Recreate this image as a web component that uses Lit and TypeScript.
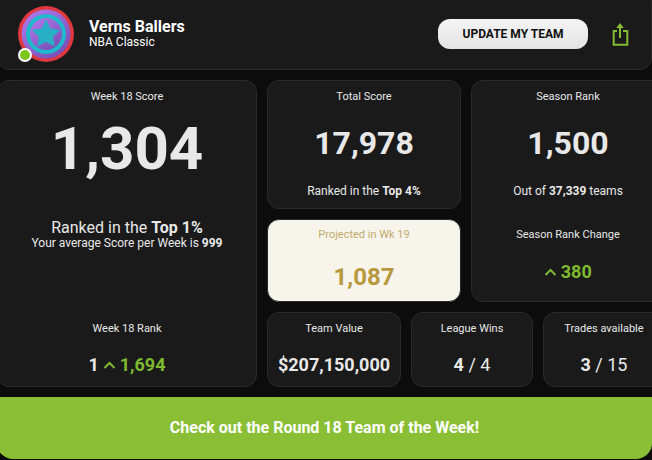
import { LitElement, css, html, svg } from 'lit'
import { customElement } from 'lit/decorators.js'

const chevron = svg`<path d="M1.5 8 L6.5 3 L11.5 8" fill="none" stroke="currentColor" stroke-width="2"/>`

@customElement('app-root')
export class AppRoot extends LitElement {
  render() {
    return html`
      <div class="page">
        <header class="card head">
          <div class="avatar">
            <svg viewBox="0 0 56 56" width="56" height="56">
              <defs>
                <linearGradient id="purple" x1="0.2" y1="0.1" x2="0.8" y2="0.9">
                  <stop offset="0" stop-color="#ab74e6"/>
                  <stop offset="1" stop-color="#7c50b8"/>
                </linearGradient>
              </defs>
              <circle cx="28" cy="28" r="28" fill="#df383f"/>
              <circle cx="28" cy="28" r="24.5" fill="url(#purple)"/>
              <circle cx="28" cy="28" r="20" fill="#1fb8cc"/>
              <circle cx="28" cy="28" r="16" fill="url(#purple)"/>
              <path d="M28 13.5 L32.4 22.4 L42.3 23.9 L35.1 30.8 L36.8 40.6 L28 36 L19.2 40.6 L20.9 30.8 L13.7 23.9 L23.6 22.4 Z" fill="#27b0c5"/>
            </svg>
            <span class="online"></span>
          </div>
          <div class="team">
            <div class="team-name">Verns Ballers</div>
            <div class="team-league">NBA Classic</div>
          </div>
          <button class="update">UPDATE MY TEAM</button>
          <svg class="share" viewBox="0 0 18 24" width="18" height="24" fill="none" stroke="#84bd33" stroke-width="2">
            <path d="M6 9 H2.7 V22.7 H16.3 V9 H12"/>
            <path d="M9 16 V4"/>
            <path d="M9 1 L12.8 6 H5.2 Z" fill="#84bd33" stroke="none"/>
          </svg>
        </header>

        <div class="grid">
          <section class="card week">
            <div class="label">Week 18 Score</div>
            <div class="huge">1,304</div>
            <div class="ranked">Ranked in the <b>Top 1%</b></div>
            <div class="avg">Your average Score per Week is <b>999</b></div>
            <div class="label week-rank">Week 18 Rank</div>
            <div class="value"><span>1</span> <svg class="up" viewBox="0 0 13 11" width="13" height="11">${chevron}</svg> <span class="green">1,694</span></div>
          </section>

          <div class="middle">
            <section class="card total">
              <div class="label">Total Score</div>
              <div class="big">17,978</div>
              <div class="note">Ranked in the <b>Top 4%</b></div>
            </section>
            <section class="card projected">
              <div class="label">Projected in Wk 19</div>
              <div class="value">1,087</div>
            </section>
          </div>

          <section class="card season">
            <div class="label">Season Rank</div>
            <div class="big">1,500</div>
            <div class="note">Out of <b>37,339</b> teams</div>
            <div class="label change">Season Rank Change</div>
            <div class="value green"><svg class="up" viewBox="0 0 13 11" width="13" height="11">${chevron}</svg> 380</div>
          </section>

          <div class="bottom">
            <section class="card small value-card">
              <div class="label">Team Value</div>
              <div class="value">$207,150,000</div>
            </section>
            <section class="card small wins">
              <div class="label">League Wins</div>
              <div class="value"><b>4</b> / 4</div>
            </section>
            <section class="card small trades">
              <div class="label">Trades available</div>
              <div class="value"><b>3</b> / 15</div>
            </section>
          </div>
        </div>

        <div class="banner">Check out the Round 18 Team of the Week!</div>
      </div>
    `
  }

  static styles = css`
    :host {
      display: block;
      width: 652px;
      height: 460px;
      overflow: hidden;
      background: #0c0c0c;
      font-family: Roboto, sans-serif;
      color: #e8e8e8;
    }

    .page {
      width: 668px;
      margin-left: -3px;
      padding-top: 0.1px;
      margin-top: -11px;
    }

    .card {
      box-sizing: border-box;
      background: #1a1a1a;
      border: 1px solid #2a2a2a;
      border-radius: 12px;
      text-align: center;
    }

    .head {
      display: flex;
      align-items: center;
      width: 655px;
      height: 81px;
      padding: 0 22px 0 20px;
      text-align: left;
    }

    .avatar {
      position: relative;
      width: 56px;
      height: 56px;
      margin-top: 9px;
    }

    .avatar svg {
      display: block;
    }

    .online {
      position: absolute;
      left: 0;
      bottom: 0;
      box-sizing: border-box;
      width: 14px;
      height: 14px;
      border-radius: 50%;
      background: #7dc51f;
      border: 2px solid #fff;
    }

    .team {
      margin: 6px 0 0 15px;
      flex: 1;
      color: #fff;
    }

    .team-name {
      font-size: 16px;
      font-weight: 700;
      line-height: 19px;
    }

    .team-league {
      font-size: 12px;
      line-height: 13px;
    }

    .update {
      width: 150px;
      height: 30px;
      margin-top: 9px;
      border: none;
      border-radius: 12px;
      background: linear-gradient(#f4f4f4, #e4e4e4);
      color: #111;
      font: 700 12px Roboto, sans-serif;
      padding: 0;
    }

    .share {
      margin: 9px 0 0 23px;
    }

    .grid {
      display: grid;
      grid-template-columns: 260px 194px 194px;
      grid-template-rows: 222px 75px;
      gap: 10px;
      margin-top: 10px;
    }

    .label {
      font-size: 11px;
      line-height: 13px;
      color: #e8e8e8;
    }

    .week {
      grid-row: 1 / 3;
      padding-top: 9px;
    }

    .huge {
      font-size: 60px;
      font-weight: 700;
      line-height: 70px;
      margin-top: 11px;
    }

    .ranked {
      font-size: 16px;
      line-height: 18px;
      margin-top: 35px;
    }

    .avg {
      font-size: 12px;
      line-height: 13px;
    }

    .week-rank {
      margin-top: 72px;
    }

    .value {
      font-size: 18px;
      font-weight: 700;
      line-height: 21px;
    }

    .week .value {
      margin-top: 19px;
    }

    .green {
      color: #7fb92f;
    }

    .up {
      color: #7fb92f;
      margin: 0 -1px 0 0;
    }

    .middle {
      display: flex;
      flex-direction: column;
      gap: 10px;
    }

    .total {
      height: 129px;
      padding-top: 9px;
    }

    .big {
      font-size: 32px;
      font-weight: 700;
      line-height: 38px;
      margin-top: 21px;
    }

    .note {
      font-size: 12px;
      line-height: 14px;
      margin-top: 22px;
    }

    .projected {
      height: 83px;
      padding-top: 8px;
      background: #f7f4ec;
    }

    .projected .label {
      color: #c4ab6c;
    }

    .projected .value {
      color: #b8983e;
      font-size: 24px;
      line-height: 28px;
      margin-top: 22px;
    }

    .season {
      padding-top: 9px;
    }

    .change {
      margin-top: 30px;
    }

    .season .value {
      margin-top: 20px;
    }

    .bottom {
      grid-column: 2 / 4;
      display: flex;
      gap: 10px;
    }

    .small {
      flex: none;
      padding-top: 9px;
    }

    .small .value {
      margin-top: 19px;
      font-weight: 400;
    }

    .value-card {
      width: 134px;
    }

    .value-card .value {
      font-weight: 700;
    }

    .wins {
      width: 122px;
    }

    .trades {
      width: 122px;
    }

    .banner {
      box-sizing: border-box;
      width: 655px;
      height: 62px;
      margin-top: 10px;
      border-radius: 0 0 16px 16px;
      background: #8abf35;
      color: #fff;
      font-size: 16px;
      font-weight: 700;
      line-height: 62px;
      text-align: center;
    }
  `
}

declare global {
  interface HTMLElementTagNameMap {
    'app-root': AppRoot
  }
}
